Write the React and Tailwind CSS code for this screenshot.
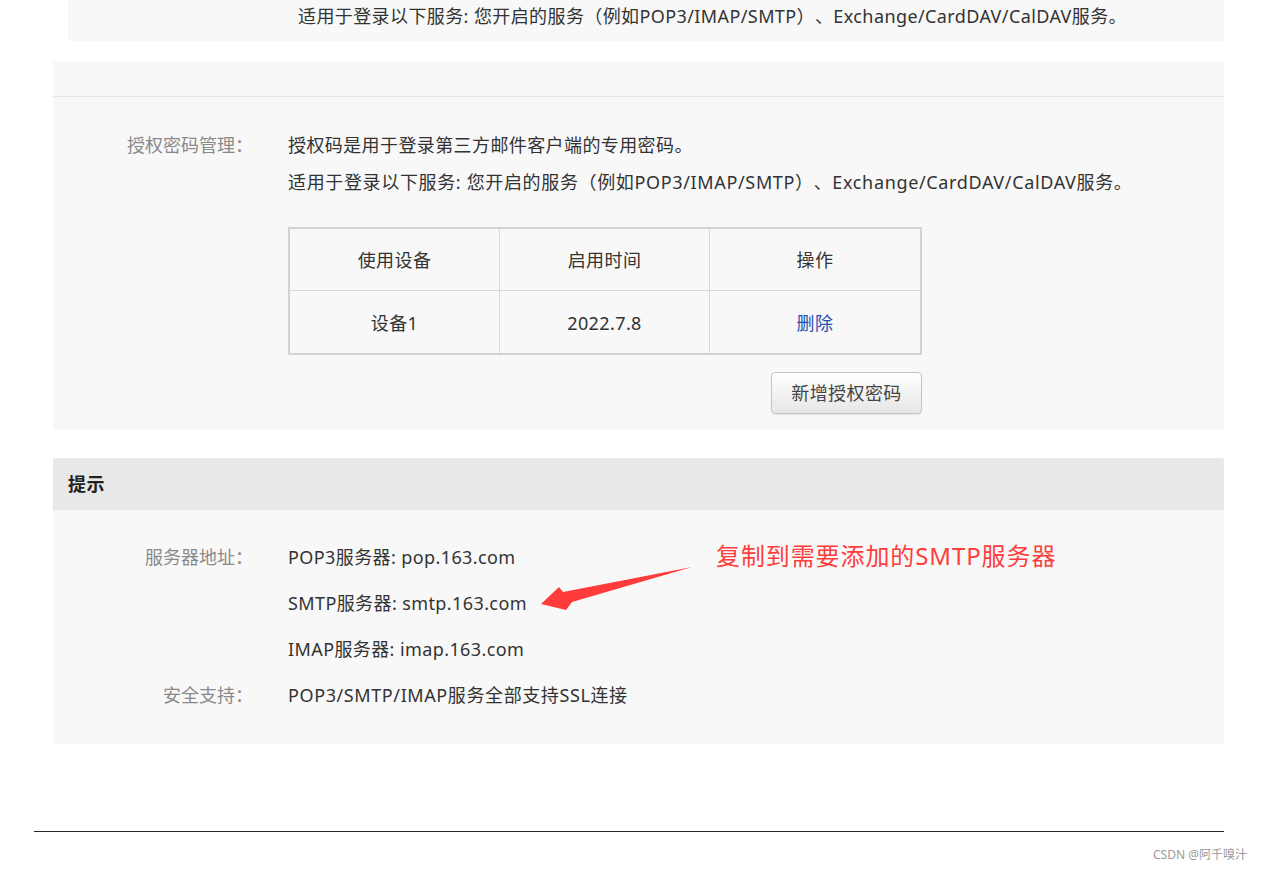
import React from "react";

const font = { fontFamily: '"Noto Sans", "Noto Sans CJK SC", sans-serif' };

const Row = ({ label, children, h = "h-[46px]" }) => (
  <div className={`flex items-center ${h}`}>
    <div className="w-[200px] text-right text-[#8a8a8a] tracking-normal">{label}</div>
    <div className="ml-[35px] text-[#333]">{children}</div>
  </div>
);

const App = () => {
  return (
    <div
      className="w-[1261px] h-[870px] bg-white text-[18px] tracking-[0.4px] [text-spacing-trim:space-all] overflow-hidden"
      style={font}
    >
      {/* 上一块的尾部 */}
      <div className="ml-[68px] w-[1156px] h-[41px] bg-[#f8f8f8] pl-[230px] leading-[32px] text-[#333]">
        适用于登录以下服务: 您开启的服务（例如POP3/IMAP/SMTP）、Exchange/CardDAV/CalDAV服务。
      </div>

      {/* 授权密码管理 */}
      <div className="ml-[53px] w-[1171px] mt-[20px] bg-[#f8f8f8] pb-[16px]">
        <div className="h-[36px] border-b border-[#e6e6e6]" />
        <div className="flex pt-[30px]">
          <div className="w-[200px] text-right text-[#8a8a8a] leading-[37px] tracking-normal">授权密码管理：</div>
          <div className="ml-[35px] text-[#333]">
            <p className="leading-[37px]">授权码是用于登录第三方邮件客户端的专用密码。</p>
            <p className="leading-[37px] tracking-[0.65px]">
              适用于登录以下服务: 您开启的服务（例如POP3/IMAP/SMTP）、Exchange/CardDAV/CalDAV服务。
            </p>
            <div className="mt-[26px] w-[634px] border-2 border-[#d3d3d3] grid grid-cols-3 text-center">
              <div className="h-[62px] pt-[2px] flex items-center justify-center border-r border-b border-[#d8d8d8]">使用设备</div>
              <div className="h-[62px] pt-[2px] flex items-center justify-center border-r border-b border-[#d8d8d8]">启用时间</div>
              <div className="h-[62px] pt-[2px] flex items-center justify-center border-b border-[#d8d8d8]">操作</div>
              <div className="h-[62px] pt-[2px] flex items-center justify-center border-r border-[#d8d8d8]">设备1</div>
              <div className="h-[62px] pt-[2px] flex items-center justify-center border-r border-[#d8d8d8]">2022.7.8</div>
              <div className="h-[62px] pt-[2px] flex items-center justify-center text-[#1f4fb5]">删除</div>
            </div>
            <div className="w-[634px] flex justify-end mt-[17px]">
              <button className="w-[151px] h-[42px] rounded-[4px] border border-[#c4c4c4] bg-gradient-to-b from-white to-[#e6e6e6] text-[#444] shadow-[0_1px_1px_rgba(0,0,0,0.08)]">
                新增授权密码
              </button>
            </div>
          </div>
        </div>
      </div>

      {/* 提示 */}
      <div className="relative ml-[53px] w-[1171px] mt-[28px] bg-[#f8f8f8] rounded-t-[3px] pb-[26px]">
        <div className="h-[52px] bg-[#e8e8e8] rounded-t-[3px] pl-[15px] flex items-center font-bold text-[#222]">
          提示
        </div>
        <div className="pt-[24px]">
          <Row label="服务器地址：">POP3服务器: pop.163.com</Row>
          <Row label="">SMTP服务器: smtp.163.com</Row>
          <Row label="">IMAP服务器: imap.163.com</Row>
          <Row label="安全支持：">
            <span className="tracking-[0.6px]">POP3/SMTP/IMAP服务全部支持SSL连接</span>
          </Row>
        </div>

        {/* 标注 */}
        <div className="absolute left-[663px] top-[80px] text-[24px] leading-[36px] font-normal tracking-[0.9px] text-[#ff3d3d]">
          复制到需要添加的SMTP服务器
        </div>
        <svg className="absolute left-[480px] top-[100px]" width="170" height="60" viewBox="480 100 170 60">
          <polygon
            points="639,109 510,134 506,129 488,146 513,152 519,144"
            fill="#ff3b3b"
          />
        </svg>
      </div>

      {/* 底部 */}
      <div className="ml-[34px] w-[1190px] mt-[87px] h-[1px] bg-[#2b2a1f]" />
      <div className="flex justify-end pr-[14px] mt-[14px] text-[12px] tracking-normal text-[#9a9a9a]">CSDN @阿千嗅汁</div>
    </div>
  );
};

export default App;
